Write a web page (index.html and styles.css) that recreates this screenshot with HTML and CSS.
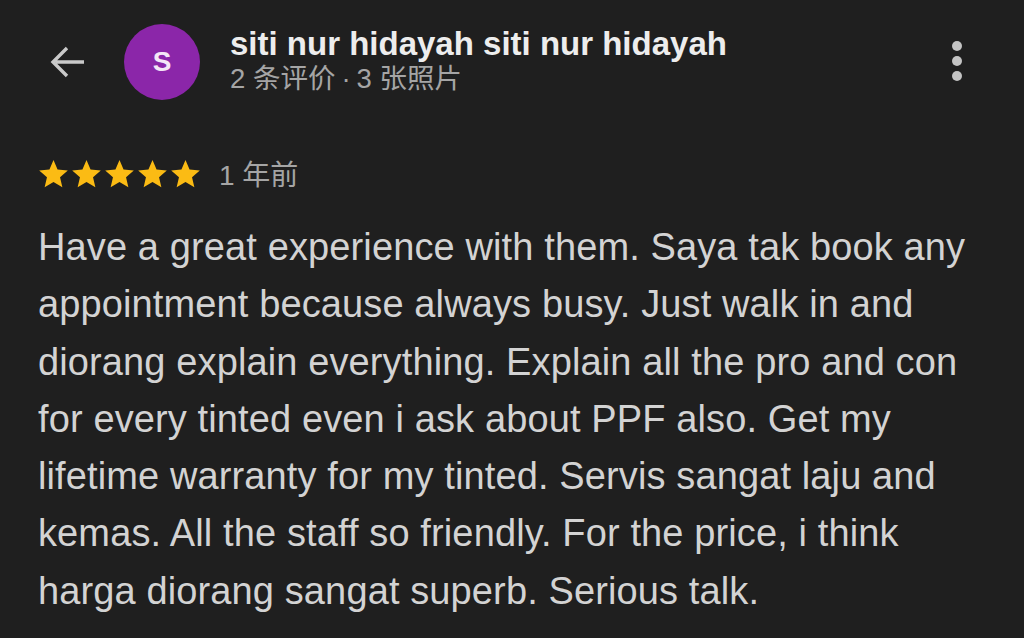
FILE: index.html
```html
<!DOCTYPE html>
<html lang="zh">
<head>
<meta charset="utf-8">
<link rel="stylesheet" href="styles.css">
</head>
<body>
<div class="page">
  <header class="top">
    <button class="back" aria-label="back">
      <svg width="40" height="40" viewBox="0 0 40 40"><path d="M38 20H9.5M21 6 7 20 21 34" fill="none" stroke="#c9c9c9" stroke-width="3.4"/></svg>
    </button>
    <div class="avatar">S</div>
    <div class="who">
      <div class="name">siti nur hidayah siti nur hidayah</div>
      <div class="meta">2 条评价<span class="sep">·</span>3 张照片</div>
    </div>
    <div class="more"><span></span><span></span><span></span></div>
  </header>
  <div class="rating">
    <div class="stars">
      <svg viewBox="0 0 24 24"><path d="M12 2.2l2.95 6.9 7.45.65-5.65 4.9 1.7 7.3L12 18.1l-6.45 3.85 1.7-7.3L1.6 9.75l7.45-.65z"/></svg>
      <svg viewBox="0 0 24 24"><path d="M12 2.2l2.95 6.9 7.45.65-5.65 4.9 1.7 7.3L12 18.1l-6.45 3.85 1.7-7.3L1.6 9.75l7.45-.65z"/></svg>
      <svg viewBox="0 0 24 24"><path d="M12 2.2l2.95 6.9 7.45.65-5.65 4.9 1.7 7.3L12 18.1l-6.45 3.85 1.7-7.3L1.6 9.75l7.45-.65z"/></svg>
      <svg viewBox="0 0 24 24"><path d="M12 2.2l2.95 6.9 7.45.65-5.65 4.9 1.7 7.3L12 18.1l-6.45 3.85 1.7-7.3L1.6 9.75l7.45-.65z"/></svg>
      <svg viewBox="0 0 24 24"><path d="M12 2.2l2.95 6.9 7.45.65-5.65 4.9 1.7 7.3L12 18.1l-6.45 3.85 1.7-7.3L1.6 9.75l7.45-.65z"/></svg>
    </div>
    <span class="when">1 年前</span>
  </div>
  <p class="review">Have a great experience with them. Saya tak book any<br>appointment because always busy. Just walk in and<br>diorang explain everything. Explain all the pro and con<br>for every tinted even i ask about PPF also. Get my<br>lifetime warranty for my tinted. Servis sangat laju and<br>kemas. All the staff so friendly. For the price, i think<br>harga diorang sangat superb. Serious talk.</p>
</div>
</body>
</html>
```

FILE: styles.css
```css
html, body {
  margin: 0;
  padding: 0;
  background: #1f1f1f;
}
body {
  width: 1024px;
  height: 638px;
  overflow: hidden;
  font-family: "Liberation Sans", Arial, "Noto Sans CJK SC", sans-serif;
}
.page {
  padding: 0 0 0 38px;
}
.top {
  display: flex;
  align-items: center;
  height: 124px;
}
.back {
  background: none;
  border: 0;
  padding: 0;
  width: 40px;
  height: 40px;
  margin: 0 0 0 8px;
  display: flex;
}
.avatar {
  width: 76px;
  height: 76px;
  border-radius: 50%;
  background: #8b26a9;
  color: #f4e6f7;
  font-weight: bold;
  font-size: 28px;
  display: flex;
  align-items: center;
  justify-content: center;
  margin-left: 38px;
  line-height: 1;
  box-sizing: border-box;
}
.who {
  margin-left: 30px;
  flex: 1;
  margin-top: -5px;
}
.name {
  color: #ededed;
  font-weight: bold;
  font-size: 33px;
  line-height: 38px;
}
.meta {
  color: #a5a5a5;
  font-size: 27.5px;
  line-height: 32px;
  font-family: "Liberation Sans", "Noto Sans CJK SC", sans-serif;
}
.sep {
  margin: 0 6px;
}
.more {
  display: flex;
  flex-direction: column;
  gap: 5px;
  margin-right: 62px;
  margin-top: -2px;
}
.more span {
  width: 10px;
  height: 10px;
  border-radius: 50%;
  background: #c4c4c4;
}
.rating {
  display: flex;
  align-items: center;
  height: 52px;
  margin-top: 23px;
}
.stars {
  display: flex;
  gap: 0;
  margin-left: -1px;
}
.stars svg {
  width: 33px;
  height: 33px;
  fill: #fbbb14;
}
.when {
  color: #a5a5a5;
  font-size: 28px;
  margin-left: 17px;
  font-family: "Liberation Sans", "Noto Sans CJK SC", sans-serif;
}
.review {
  margin: 20px 0 0 0;
  width: 980px;
  color: #d3d3d3;
  font-size: 38px;
  line-height: 57.3px;
  letter-spacing: 0.12px;
  white-space: nowrap;
}
```
